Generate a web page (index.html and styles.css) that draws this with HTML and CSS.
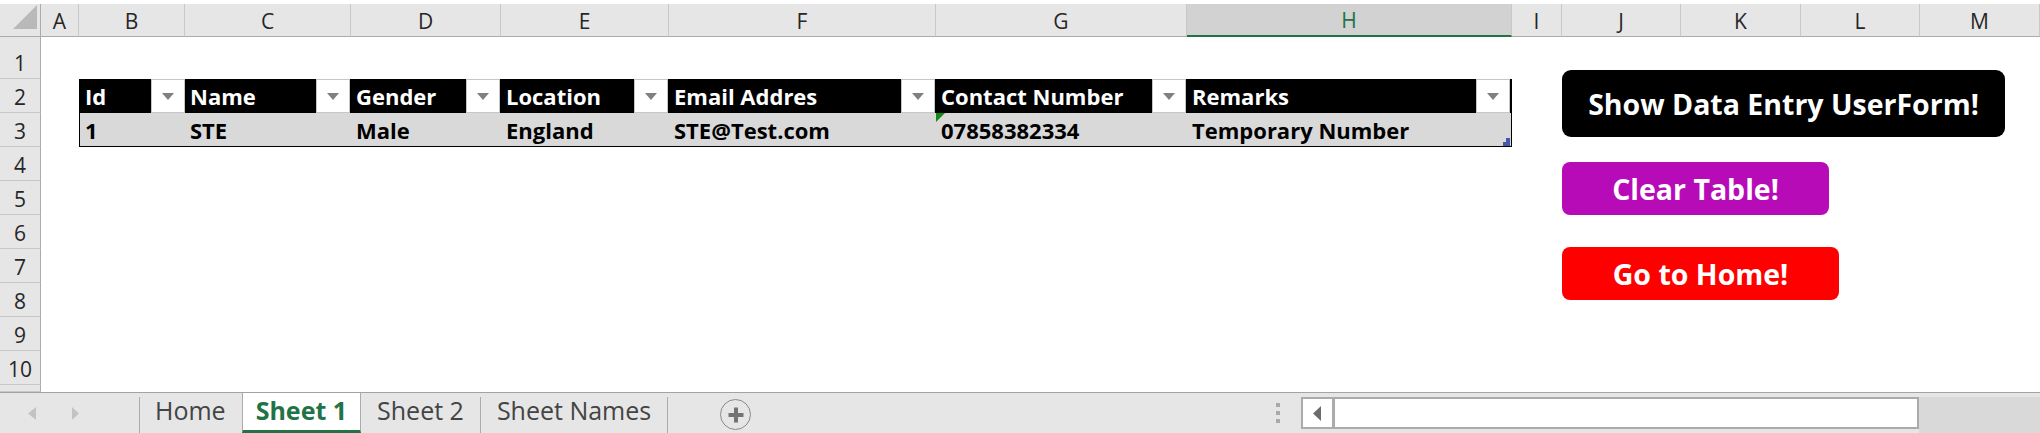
FILE: index.html
```html
<!DOCTYPE html>
<html>
<head>
<meta charset="utf-8">
<title>Sheet 1</title>
<link rel="stylesheet" href="styles.css">
</head>
<body>
<div class="sheet">
  <div class="corner"><svg width="40" height="32" viewBox="0 0 40 32"><polygon points="13,25 37,25 37,1" fill="#b9b9b9"/></svg></div>
  <div class="colhead">A</div>
  <div class="colhead">B</div>
  <div class="colhead">C</div>
  <div class="colhead">D</div>
  <div class="colhead">E</div>
  <div class="colhead">F</div>
  <div class="colhead">G</div>
  <div class="colhead sel">H</div>
  <div class="colhead">I</div>
  <div class="colhead">J</div>
  <div class="colhead">K</div>
  <div class="colhead">L</div>
  <div class="colhead">M</div>

  <div class="rowhead">1</div>
  <div class="rowhead">2</div>
  <div class="rowhead">3</div>
  <div class="rowhead">4</div>
  <div class="rowhead">5</div>
  <div class="rowhead">6</div>
  <div class="rowhead">7</div>
  <div class="rowhead">8</div>
  <div class="rowhead">9</div>
  <div class="rowhead">10</div>
  <div class="rowhead"></div>

  <div class="table">
    <div class="th"><span>Id</span><span class="dd"></span></div>
    <div class="th"><span>Name</span><span class="dd"></span></div>
    <div class="th"><span>Gender</span><span class="dd"></span></div>
    <div class="th"><span>Location</span><span class="dd"></span></div>
    <div class="th"><span>Email Addres</span><span class="dd"></span></div>
    <div class="th"><span>Contact Number</span><span class="dd"></span></div>
    <div class="th"><span>Remarks</span><span class="dd"></span></div>
    <div class="td">1</div>
    <div class="td">STE</div>
    <div class="td">Male</div>
    <div class="td">England</div>
    <div class="td">STE@Test.com</div>
    <div class="td err">07858382334</div>
    <div class="td last">Temporary Number<svg class="handle" width="7" height="8" viewBox="0 0 7 8"><rect x="3" y="0" width="4" height="8" fill="#4756a8"/><rect x="0" y="4" width="7" height="4" fill="#4756a8"/></svg></div>
  </div>

  <div class="shapes">
    <div class="btn btn-show">Show Data Entry UserForm!</div>
    <div class="btn btn-clear">Clear Table!</div>
    <div class="btn btn-home">Go to Home!</div>
  </div>
</div>

<div class="tabbar">
  <div class="nav"><svg width="139" height="40" viewBox="0 0 139 40"><polygon points="36,14 36,27 28,20.5" fill="#c3c3c3"/><polygon points="72,14 72,27 79,20.5" fill="#c3c3c3"/></svg></div>
  <div class="sep"></div>
  <div class="tab tab-first">Home</div>
  <div class="tab active">Sheet 1</div>
  <div class="tab">Sheet 2</div>
  <div class="sep"></div>
  <div class="tab">Sheet Names</div>
  <div class="sep"></div>
  <div class="add"><svg width="28" height="28" viewBox="0 0 28 28"><rect x="6.5" y="12" width="15" height="4" fill="#737373"/><rect x="12" y="6.5" width="4" height="15" fill="#737373"/></svg></div>
  <div class="dots"><span></span><span></span><span></span></div>
  <div class="scroll">
    <div class="sarrow"><svg width="29" height="28" viewBox="0 0 29 28"><polygon points="18,7 18,22 10,14.5" fill="#6b6b6b"/></svg></div>
    <div class="track"></div>
  </div>
  <div class="tail"></div>
</div>
</body>
</html>
```

FILE: styles.css
```css
html, body {
  margin: 0;
  padding: 0;
}

body {
  width: 2040px;
  height: 433px;
  overflow: hidden;
  background: #ffffff;
  font-family: "Open Sans", "Noto Sans", sans-serif;
  color: #000;
}

.sheet {
  position: relative;
  box-sizing: border-box;
  height: 392px;
  padding-top: 4px;
  display: grid;
  grid-template-columns: 41px 38px 106px 166px 150px 168px 267px 251px 325px 50px 119px 120px 119px 120px;
  grid-template-rows: 33px 42px repeat(9, 34px) 7px;
}

.corner {
  box-sizing: border-box;
  background: #e6e6e6;
  border-right: 1px solid #ababab;
  border-bottom: 1px solid #ababab;
}

.corner svg {
  display: block;
}

.colhead {
  box-sizing: border-box;
  background: #e6e6e6;
  border-right: 1px solid #c8c8c8;
  border-bottom: 1px solid #ababab;
  display: flex;
  align-items: flex-end;
  justify-content: center;
  font-size: 21px;
  line-height: 30px;
  color: #262626;
}

.colhead.sel {
  background: #d2d2d2;
  color: #217346;
  border-bottom: 2px solid #217346;
}

.rowhead {
  grid-column: 1;
  box-sizing: border-box;
  background: #e6e6e6;
  border-right: 1px solid #ababab;
  border-bottom: 1px solid #c8c8c8;
  display: flex;
  align-items: flex-end;
  justify-content: center;
  font-size: 21px;
  line-height: 30px;
  color: #262626;
  overflow: hidden;
}

.table {
  grid-column: 3 / 10;
  grid-row: 3 / 5;
  box-sizing: border-box;
  border: 1px solid #000;
  border-top: 0;
  display: grid;
  grid-template-columns: 105px 166px 150px 168px 267px 251px 324px;
  grid-template-rows: 34px 33px;
  font-weight: 700;
  font-size: 22px;
  line-height: 34px;
}

.th {
  background: #000;
  color: #fff;
  display: flex;
  justify-content: space-between;
  align-items: flex-start;
  padding-left: 5px;
  padding-right: 1px;
  white-space: nowrap;
}

.th:first-child {
  padding-right: 0;
}

.dd {
  box-sizing: border-box;
  width: 34px;
  height: 34px;
  background: #fff;
  border: 1px solid #c6c6c6;
  display: flex;
  align-items: center;
  justify-content: center;
}

.dd::after {
  content: "";
  width: 0;
  height: 0;
  border-left: 6.5px solid transparent;
  border-right: 6.5px solid transparent;
  border-top: 7px solid #808080;
}

.td {
  position: relative;
  background: #d9d9d9;
  padding-left: 5px;
  white-space: nowrap;
  overflow: hidden;
}

.td.err::before {
  content: "";
  position: absolute;
  left: 0;
  top: 0;
  width: 0;
  height: 0;
  border-top: 9px solid #138a13;
  border-right: 9px solid transparent;
}

.handle {
  position: absolute;
  right: 1px;
  bottom: 0;
}

.shapes {
  position: absolute;
  left: 1562px;
  top: 70px;
  display: flex;
  flex-direction: column;
  align-items: flex-start;
}

.btn {
  display: flex;
  align-items: center;
  justify-content: center;
  color: #fff;
  font-weight: 700;
  font-size: 28.5px;
  border-radius: 8px;
  white-space: nowrap;
}

.btn-show {
  width: 443px;
  height: 67px;
  background: #000;
  border-radius: 9px;
}

.btn-clear {
  width: 267px;
  height: 53px;
  margin-top: 25px;
  background: #b80bb8;
}

.btn-home {
  width: 277px;
  height: 53px;
  margin-top: 32px;
  background: #ff0000;
}

.tabbar {
  box-sizing: border-box;
  height: 41px;
  background: #e6e6e6;
  border-top: 1px solid #a3a3a3;
  display: flex;
}

.nav svg {
  display: block;
}

.sep {
  width: 1px;
  background: #ababab;
  margin-top: 4px;
}

.tab {
  box-sizing: border-box;
  padding: 0 16px;
  font-size: 25px;
  line-height: 34px;
  color: #444;
  white-space: nowrap;
}

.tab.tab-first {
  padding: 0 16px 0 15px;
}

.tab.active {
  background: #fff;
  border-left: 1px solid #ababab;
  border-right: 1px solid #ababab;
  border-bottom: 3px solid #217346;
  padding: 0 13px;
  color: #217346;
  font-weight: 700;
}

.add {
  box-sizing: border-box;
  width: 31px;
  height: 31px;
  margin: 6px 0 0 52px;
  border: 1.5px solid #8a8a8a;
  border-radius: 50%;
  display: flex;
  align-items: center;
  justify-content: center;
}

.add svg {
  display: block;
}

.dots {
  margin-left: auto;
  margin-top: 10px;
  width: 4px;
  display: flex;
  flex-direction: column;
  gap: 4px;
}

.dots span {
  display: block;
  width: 4px;
  height: 4px;
  background: #a9a9a9;
}

.scroll {
  box-sizing: border-box;
  width: 618px;
  height: 32px;
  margin: 4px 0 0 21px;
  border: 2px solid #ababab;
  background: #fff;
  display: flex;
}

.sarrow {
  box-sizing: border-box;
  width: 32px;
  border-right: 3px solid #ababab;
}

.sarrow svg {
  display: block;
}

.track {
  flex: 1;
}

.tail {
  width: 121px;
  margin-top: 4px;
  background: #d9d9d9;
}
```
